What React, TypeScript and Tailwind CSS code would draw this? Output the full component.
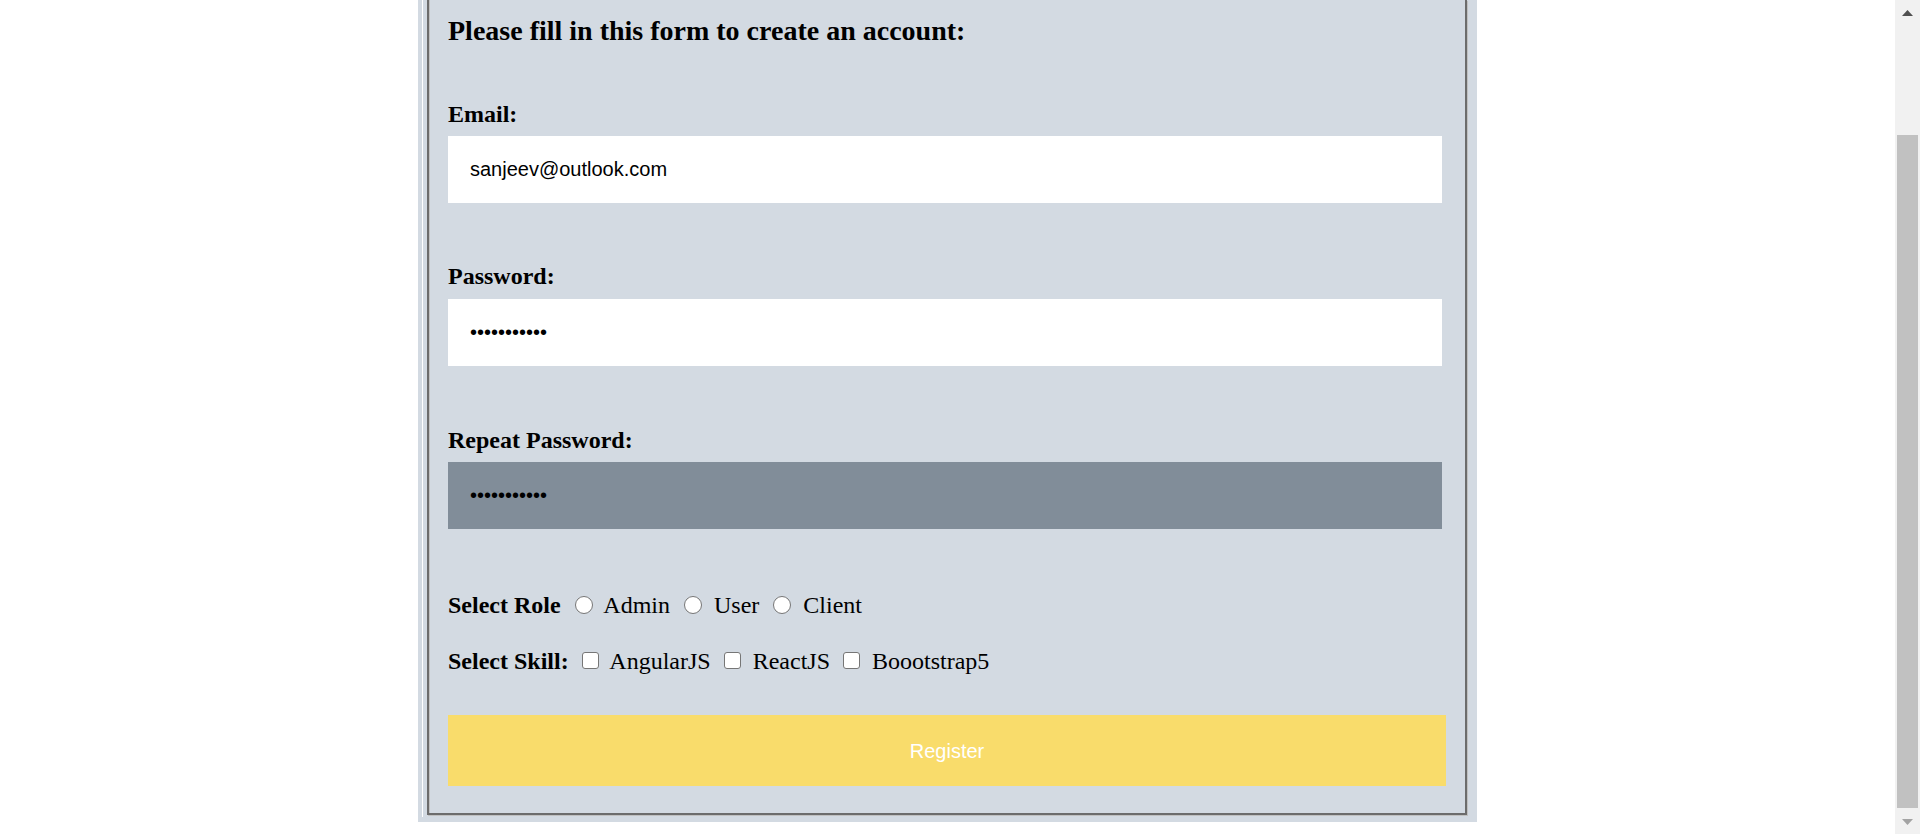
export default function App() {
  return (
    <div className="flex h-[834px] w-full overflow-hidden bg-white">
      <main className="min-w-0 flex-1">
        <div className="mx-auto w-[1059px] bg-[#d3dae2] pb-[5px] pl-[4px] pr-[10px]">
          <div className="border-l border-white pb-[2px] pl-[4px]">
            <form
              className="border-x-2 border-b-2 border-[#6c6c6c] px-[19px] pt-[15px] pb-[27px] font-['Liberation_Serif','Times_New_Roman',serif] text-black shadow-[inset_1px_0_0_#c0c0c0,1px_1px_0_#c0c0c0]"
              onSubmit={(e) => e.preventDefault()}
            >
              <h3 className="text-[28px] font-bold leading-[32px]">
                Please fill in this form to create an account:
              </h3>

              <label className="mt-[54px] block text-[24px] font-bold leading-[27px]">
                Email:
              </label>
              <input
                type="email"
                defaultValue="sanjeev@outlook.com"
                className="mt-[8px] block h-[67px] w-[994px] bg-white pl-[22px] font-['Liberation_Sans',Arial,sans-serif] text-[20px] text-black outline-none"
              />

              <label className="mt-[60px] block text-[24px] font-bold leading-[27px]">
                Password:
              </label>
              <input
                type="password"
                defaultValue="password123"
                className="mt-[9px] block h-[67px] w-[994px] bg-white pl-[22px] font-['Liberation_Sans',Arial,sans-serif] text-[20px] text-black outline-none"
              />

              <label className="mt-[61px] block text-[24px] font-bold leading-[27px]">
                Repeat Password:
              </label>
              <input
                type="password"
                defaultValue="password123"
                className="mt-[8px] block h-[67px] w-[994px] bg-[#818d99] pl-[22px] font-['Liberation_Sans',Arial,sans-serif] text-[20px] text-black outline-none"
              />

              <div className="mt-[63px] text-[24px] leading-[27px]">
                <b>Select Role</b>{" "}
                <input
                  type="radio"
                  name="role"
                  className="ml-[8px] mr-[6px] h-[18px] w-[18px] appearance-none rounded-full border border-[#767676] bg-white align-[-1px]"
                />{" "}
                Admin{" "}
                <input
                  type="radio"
                  name="role"
                  className="ml-[8px] mr-[6px] h-[18px] w-[18px] appearance-none rounded-full border border-[#767676] bg-white align-[-1px]"
                />{" "}
                User{" "}
                <input
                  type="radio"
                  name="role"
                  className="ml-[8px] mr-[6px] h-[18px] w-[18px] appearance-none rounded-full border border-[#767676] bg-white align-[-1px]"
                />{" "}
                Client
              </div>

              <div className="mt-[29px] text-[24px] leading-[27px]">
                <b>Select Skill:</b>{" "}
                <input
                  type="checkbox"
                  className="ml-[7px] mr-[6px] h-[17px] w-[17px] appearance-none rounded-[3px] border border-[#767676] bg-white align-baseline"
                />{" "}
                AngularJS{" "}
                <input
                  type="checkbox"
                  className="ml-[7px] mr-[6px] h-[17px] w-[17px] appearance-none rounded-[3px] border border-[#767676] bg-white align-baseline"
                />{" "}
                ReactJS{" "}
                <input
                  type="checkbox"
                  className="ml-[7px] mr-[6px] h-[17px] w-[17px] appearance-none rounded-[3px] border border-[#767676] bg-white align-baseline"
                />{" "}
                Boootstrap5
              </div>

              <button
                type="submit"
                className="mt-[40px] block h-[71px] w-full bg-[#f9dc6b] font-['Liberation_Sans',Arial,sans-serif] text-[20px] text-white"
              >
                Register
              </button>
            </form>
          </div>
        </div>
      </main>

      {/* classic scrollbar, scrolled to the bottom */}
      <div className="flex w-[25px] shrink-0 flex-col bg-[#f1f1f1]">
        <div className="flex h-[25px] items-center justify-center">
          <svg width="11" height="6" viewBox="0 0 11 6">
            <path d="M5.5 0L11 6H0Z" fill="#505050" />
          </svg>
        </div>
        <div className="flex-1 px-[2px] pt-[110px]">
          <div className="h-[673px] bg-[#c1c1c1]" />
        </div>
        <div className="flex h-[25px] items-center justify-center">
          <svg width="11" height="6" viewBox="0 0 11 6">
            <path d="M0 0H11L5.5 6Z" fill="#a3a3a3" />
          </svg>
        </div>
      </div>
    </div>
  );
}
